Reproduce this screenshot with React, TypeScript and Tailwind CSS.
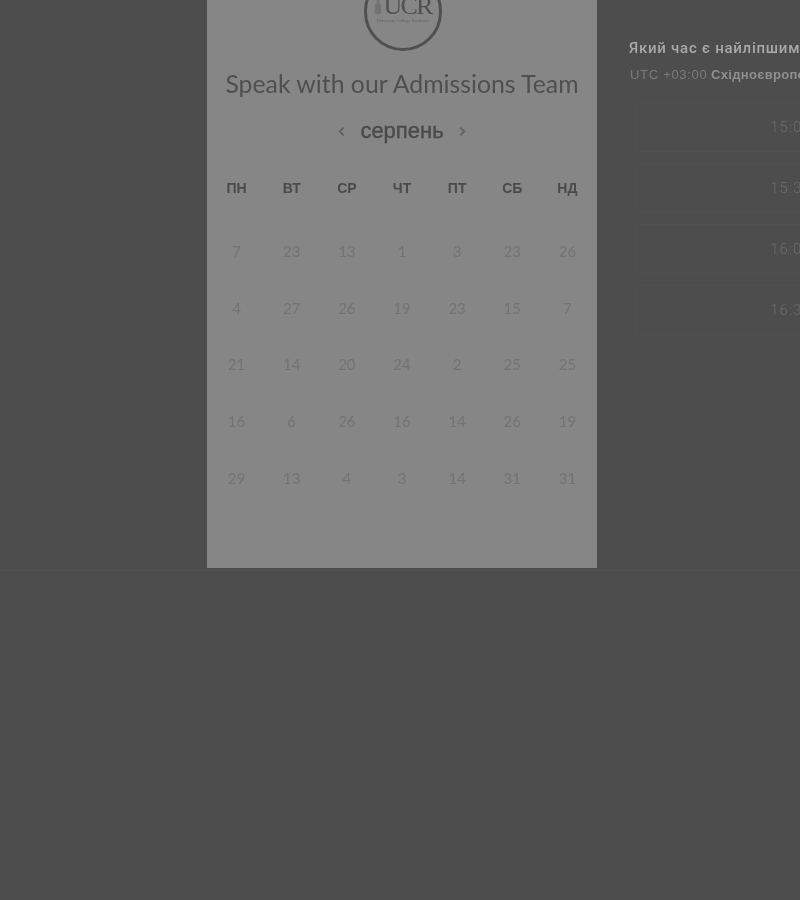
const weekdays = ["ПН", "ВТ", "СР", "ЧТ", "ПТ", "СБ", "НД"];
const rows = [
  [7, 23, 13, 1, 3, 23, 26],
  [4, 27, 26, 19, 23, 15, 7],
  [21, 14, 20, 24, 2, 25, 25],
  [16, 6, 26, 16, 14, 26, 19],
  [29, 13, 4, 3, 14, 31, 31],
];
const slots = ["15:00", "15:30", "16:00", "16:30"];

export default function App() {
  return (
    <div className="h-[900px] w-[800px] overflow-hidden bg-[#4d4d4d] font-['Liberation_Sans',sans-serif]">
      <div className="flex h-[571px] border-b border-[#515151]">
        <div className="w-[207px] shrink-0" />
        <div className="h-[568px] w-[390px] shrink-0 overflow-hidden bg-[#868686] pr-[2px] pl-[2px]">
          <div className="-mt-[28px] ml-[155px] flex h-[79px] w-[78px] flex-col items-center justify-end rounded-full border-[3px] border-[#505050] pb-[25px] blur-[0.4px]">
            <div className="flex items-end">
              <svg width="8" height="20" viewBox="0 0 9 20" className="mr-px mb-[3px]">
                <path d="M1 20V9h2V3l1.500-3L6 3v6h2v11z" fill="#737373" />
              </svg>
              <span className="font-['Liberation_Serif',serif] text-[26px] leading-[24px] tracking-[-1.800px] text-[#505050]">UCR</span>
            </div>
            <span className="font-['Liberation_Serif',serif] text-[4.500px] leading-[5px] whitespace-nowrap text-[#606060]">University College Rochester</span>
          </div>
          <h1 className="mt-[18px] text-center font-['Lato',sans-serif] text-[24.800px] leading-[30px] font-normal whitespace-nowrap text-[#4f4f4f] blur-[0.3px]">
            Speak with our Admissions Team
          </h1>
          <div className="mt-[17px] flex h-[30px] items-center justify-center gap-[15px] text-[#4a4a4a] blur-[0.3px]">
            <svg width="7" height="11" viewBox="0 0 8 12" fill="none" stroke="#626262" strokeWidth="2.200">
              <path d="M6.500 1.500 2 6l4.500 4.500" />
            </svg>
            <span className="text-[22px] leading-[30px] [-webkit-text-stroke:0.4px_#4a4a4a]">серпень</span>
            <svg width="7" height="11" viewBox="0 0 8 12" fill="none" stroke="#626262" strokeWidth="2.200">
              <path d="M1.500 1.500 6 6l-4.500 4.500" />
            </svg>
          </div>
          <div className="mt-[32px] grid grid-cols-7 text-center text-[14px] leading-[20px] font-bold text-[#4a4a4a] blur-[0.3px]">
            {weekdays.map((d) => (
              <div key={d}>{d}</div>
            ))}
          </div>
          <div className="mt-[25px] grid grid-cols-7 auto-rows-[56.700px] text-center font-['Lato',sans-serif] text-[15px] leading-[56.700px] text-[#737373] blur-[0.3px]">
            {rows.flat().map((n, i) => (
              <div key={i}>{n}</div>
            ))}
          </div>
        </div>
        <div className="ml-[32px] min-w-0 flex-1 pt-[39px]">
          <div className="font-['Roboto',sans-serif] text-[15px] leading-[18px] font-medium tracking-[0.75px] whitespace-nowrap text-[#a8a8a8] blur-[0.3px]">
            Який час є найліпшим для вас?
          </div>
          <div className="mt-[9px] ml-px text-[13px] leading-[18px] whitespace-nowrap text-[#7a7a7a] blur-[0.3px]">
            <span className="tracking-[0.7px]">UTC +03:00</span> <span className="font-bold tracking-[0.3px] text-[#8f8f8f]">Східноєвропейський час</span>
          </div>
          <div className="mt-[18px] flex w-[312px] flex-col gap-[11px] pl-[6px]">
            {slots.map((t) => (
              <div
                key={t}
                className="flex h-[50px] w-[312px] shrink-0 items-center justify-center rounded-[3px] border border-[#505050] font-['Roboto',sans-serif] text-[15px] font-light tracking-[1px] text-[#6c6c6c] blur-[0.3px]"
              >
                {t}
              </div>
            ))}
          </div>
        </div>
      </div>
    </div>
  );
}
